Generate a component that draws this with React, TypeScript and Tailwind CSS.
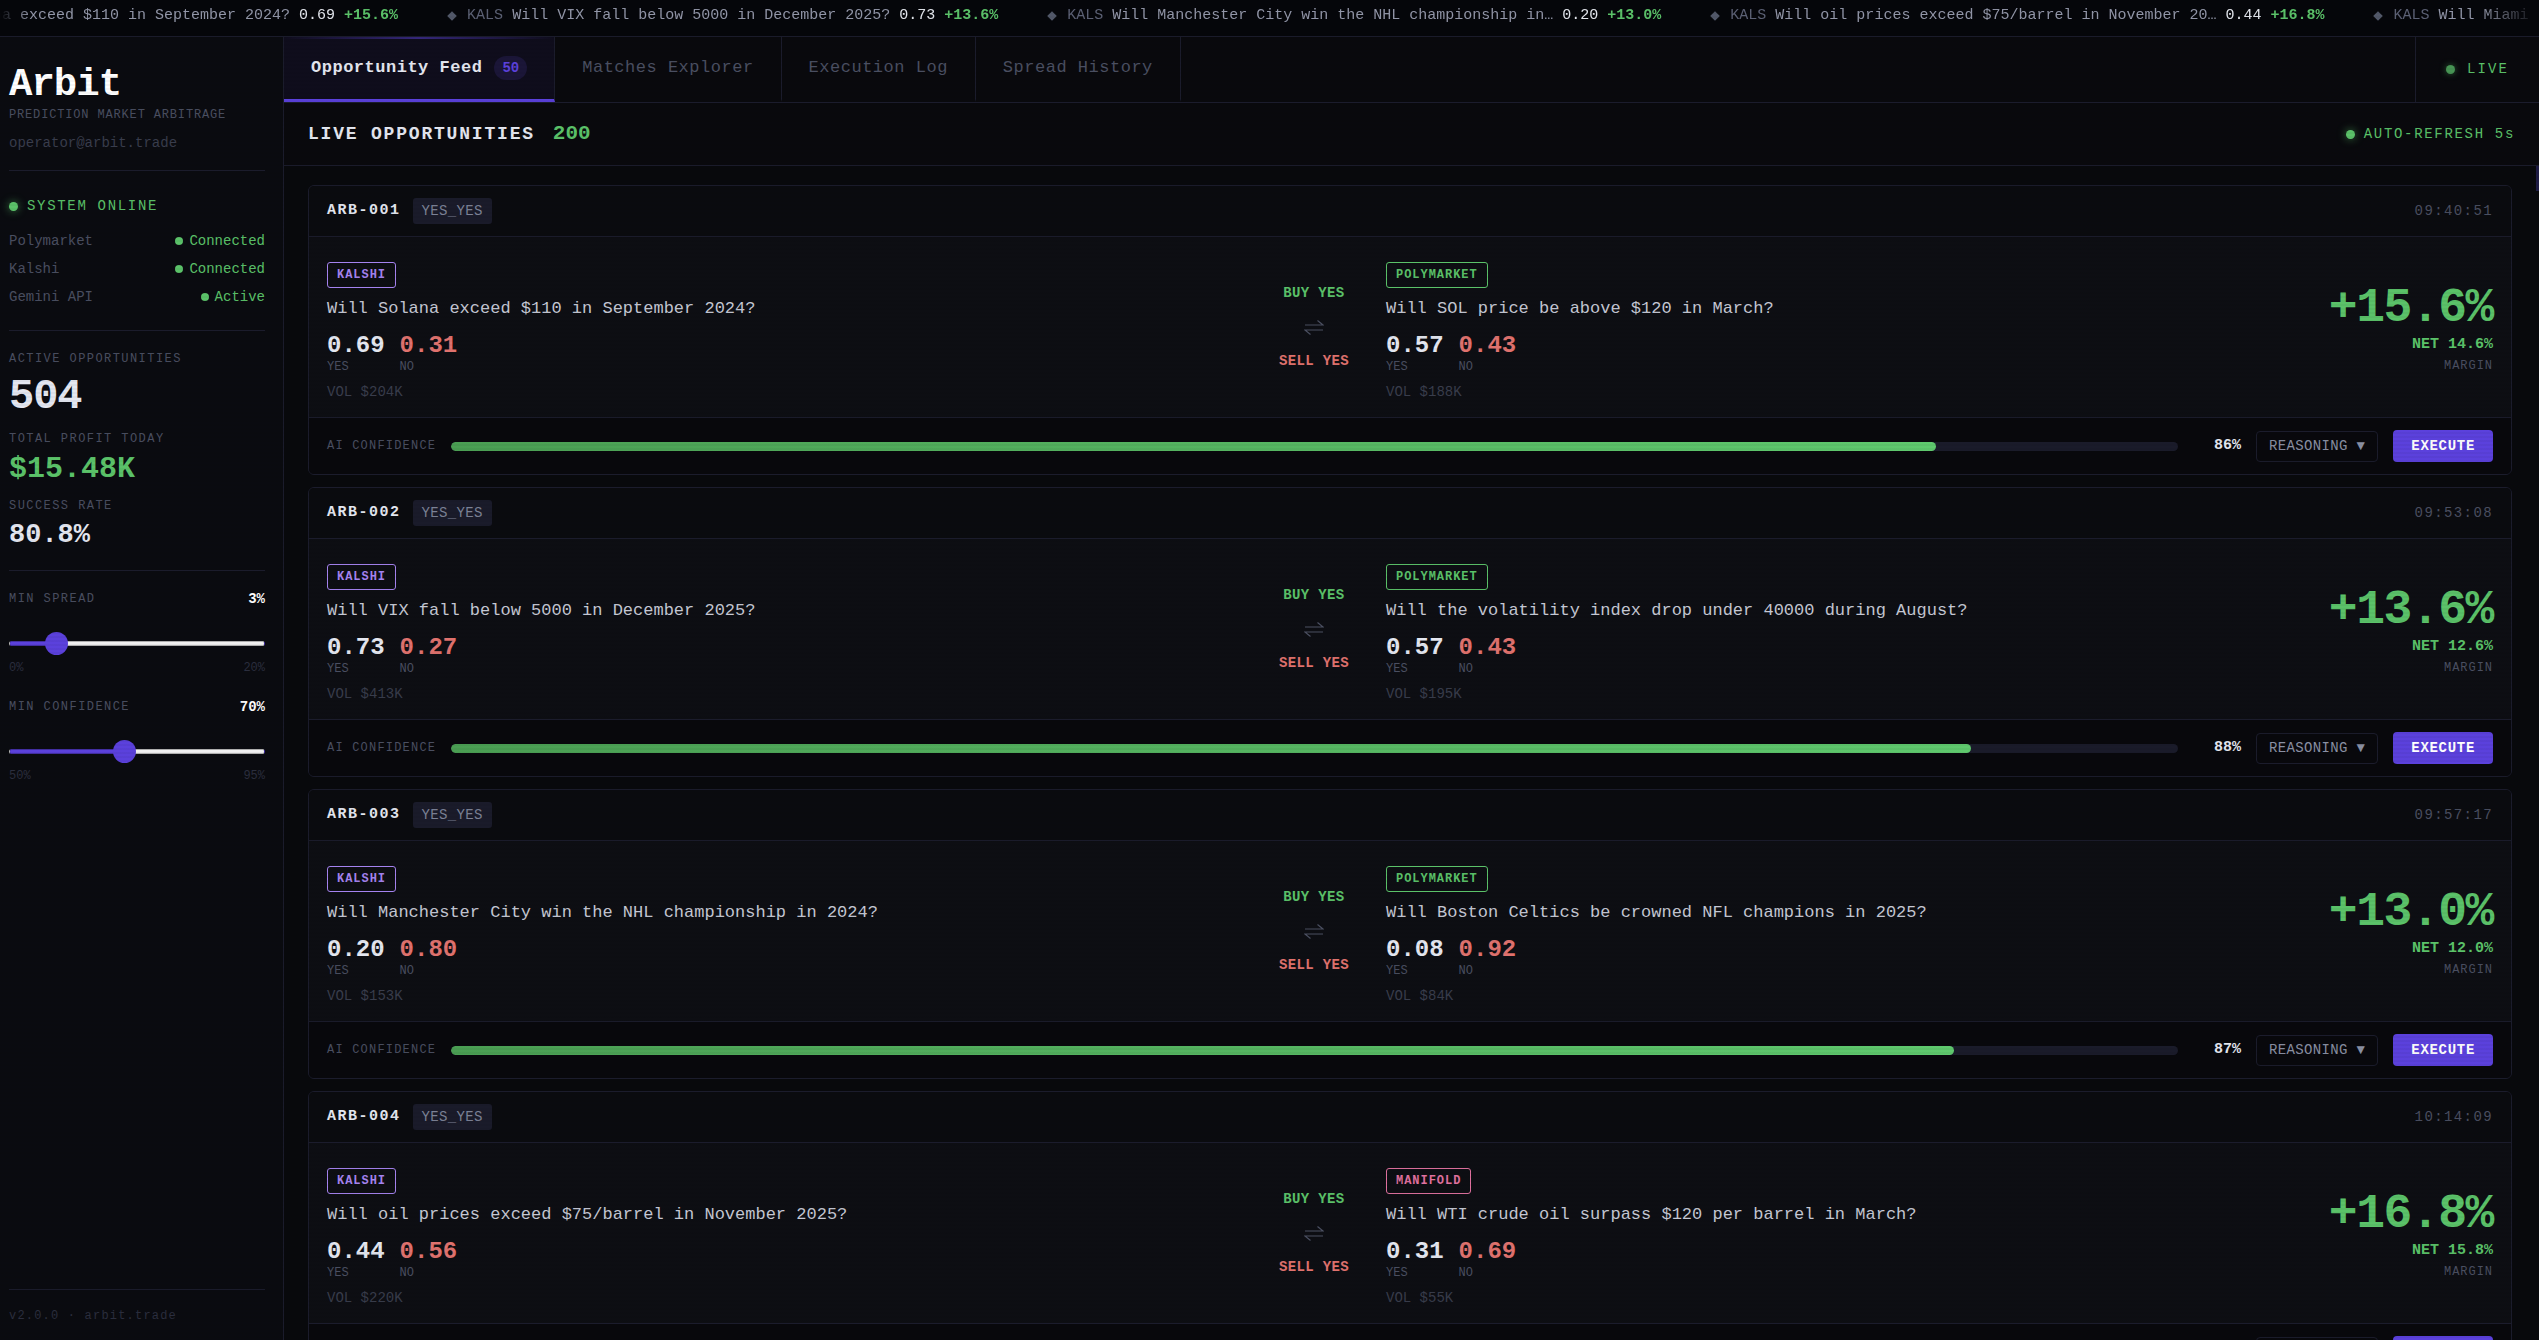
import { useState } from 'react'
import type { CSSProperties } from 'react'
import { clsx } from 'clsx'

type Platform = 'KALSHI' | 'POLYMARKET' | 'MANIFOLD'

interface Market {
  platform: Platform
  question: string
  yes: string
  no: string
  volume: string
}

interface Opportunity {
  id: string
  time: string
  left: Market
  right: Market
  spread: string
  net: string
  confidence: number
}

const TICKER = [
  { text: 'Will Solana exceed $110 in September 2024?', price: '0.69', spread: '+15.6%' },
  { text: 'Will VIX fall below 5000 in December 2025?', price: '0.73', spread: '+13.6%' },
  { text: 'Will Manchester City win the NHL championship in…', price: '0.20', spread: '+13.0%' },
  { text: 'Will oil prices exceed $75/barrel in November 20…', price: '0.44', spread: '+16.8%' },
  { text: 'Will Miami', price: '', spread: '' },
]

const TABS = [
  { id: 'feed', label: 'Opportunity Feed', count: 50 },
  { id: 'matches', label: 'Matches Explorer' },
  { id: 'log', label: 'Execution Log' },
  { id: 'history', label: 'Spread History' },
]

const SERVICES = [
  { name: 'Polymarket', status: 'Connected' },
  { name: 'Kalshi', status: 'Connected' },
  { name: 'Gemini API', status: 'Active' },
]

const OPPORTUNITIES: Opportunity[] = [
  {
    id: 'ARB-001',
    time: '09:40:51',
    left: { platform: 'KALSHI', question: 'Will Solana exceed $110 in September 2024?', yes: '0.69', no: '0.31', volume: '$204K' },
    right: { platform: 'POLYMARKET', question: 'Will SOL price be above $120 in March?', yes: '0.57', no: '0.43', volume: '$188K' },
    spread: '+15.6%',
    net: '14.6%',
    confidence: 86,
  },
  {
    id: 'ARB-002',
    time: '09:53:08',
    left: { platform: 'KALSHI', question: 'Will VIX fall below 5000 in December 2025?', yes: '0.73', no: '0.27', volume: '$413K' },
    right: { platform: 'POLYMARKET', question: 'Will the volatility index drop under 40000 during August?', yes: '0.57', no: '0.43', volume: '$195K' },
    spread: '+13.6%',
    net: '12.6%',
    confidence: 88,
  },
  {
    id: 'ARB-003',
    time: '09:57:17',
    left: { platform: 'KALSHI', question: 'Will Manchester City win the NHL championship in 2024?', yes: '0.20', no: '0.80', volume: '$153K' },
    right: { platform: 'POLYMARKET', question: 'Will Boston Celtics be crowned NFL champions in 2025?', yes: '0.08', no: '0.92', volume: '$84K' },
    spread: '+13.0%',
    net: '12.0%',
    confidence: 87,
  },
  {
    id: 'ARB-004',
    time: '10:14:09',
    left: { platform: 'KALSHI', question: 'Will oil prices exceed $75/barrel in November 2025?', yes: '0.44', no: '0.56', volume: '$220K' },
    right: { platform: 'MANIFOLD', question: 'Will WTI crude oil surpass $120 per barrel in March?', yes: '0.31', no: '0.69', volume: '$55K' },
    spread: '+16.8%',
    net: '15.8%',
    confidence: 86,
  },
]

const PLATFORM_STYLES: Record<Platform, string> = {
  KALSHI: 'border-[#a583f0] text-[#a583f0]',
  POLYMARKET: 'border-[#5bc269] text-[#5bc269]',
  MANIFOLD: 'border-[#e0719f] text-[#e0719f]',
}

function Ticker() {
  return (
    <div className="h-[37px] shrink-0 overflow-hidden border-b border-[#1b1c2c] bg-[#05060a]">
      <div className="flex h-8 items-center overflow-hidden [mask-image:linear-gradient(to_right,transparent,black_30px,black_calc(100%-60px),transparent)]">
        <div className="-ml-[178px] flex text-[15px] whitespace-nowrap">
          {TICKER.map((item) => (
            <div key={item.text} className="flex items-center gap-[9px] px-6">
              <svg viewBox="0 0 12 12" className="size-3 fill-[#525869]">
                <path d="M6 1.2 10.8 6 6 10.8 1.2 6Z" />
              </svg>
              <span className="text-[#5c6175]">KALS</span>
              <span className="text-[#9296a8]">{item.text}</span>
              <span className="text-[#e4e7ee]">{item.price}</span>
              <span className="font-bold text-[#5bc269]">{item.spread}</span>
            </div>
          ))}
        </div>
      </div>
    </div>
  )
}

function RangeField({ id, label, min, max, initial }: {
  id: string
  label: string
  min: number
  max: number
  initial: number
}) {
  const [value, setValue] = useState(initial)
  const fill = ((value - min) / (max - min)) * 100

  return (
    <div>
      <div className="flex h-6 items-center justify-between">
        <label htmlFor={id} className="text-[12px] tracking-[0.12em] text-[#4a4f61]">{label}</label>
        <span className="text-[14px] font-bold text-white">{value}%</span>
      </div>
      <input
        id={id}
        type="range"
        min={min}
        max={max}
        value={value}
        onChange={(e) => setValue(Number(e.target.value))}
        style={{ '--fill': `${fill}%` } as CSSProperties}
        className="mt-5 block h-6 w-full appearance-none bg-transparent [&::-webkit-slider-runnable-track]:h-[5px] [&::-webkit-slider-runnable-track]:rounded-full [&::-webkit-slider-runnable-track]:border [&::-webkit-slider-runnable-track]:border-black/25 [&::-webkit-slider-runnable-track]:bg-[linear-gradient(to_right,#5b41dc_var(--fill),#f0f0f0_var(--fill))] [&::-webkit-slider-thumb]:-mt-[10px] [&::-webkit-slider-thumb]:size-[23px] [&::-webkit-slider-thumb]:appearance-none [&::-webkit-slider-thumb]:rounded-full [&::-webkit-slider-thumb]:bg-[#5b41dc]"
      />
      <div className="mt-[3px] flex justify-between text-[12px] leading-5 text-[#2b2e3e]">
        <span>{min}%</span>
        <span>{max}%</span>
      </div>
    </div>
  )
}

function Sidebar() {
  return (
    <aside className="flex w-[284px] shrink-0 flex-col border-r border-[#1b1c2c] bg-[#0a0b10] pr-[18px] pl-[9px]">
      <div className="border-b border-[#1b1c2c] pt-7 pb-[17px]">
        <h1 className="text-[39px] leading-10 font-bold tracking-tight text-white">Arbit</h1>
        <p className="mt-0.5 text-[12px] leading-4 tracking-[0.07em] text-[#4a4f61]">PREDICTION MARKET ARBITRAGE</p>
        <p className="mt-[10px] text-[14px] leading-5 text-[#393d4c]">operator@arbit.trade</p>
      </div>

      <div className="border-b border-[#1b1c2c] pt-[25px] pb-[19px]">
        <div className="mb-[11px] flex h-5 items-center gap-[9px] text-[14px] tracking-[0.12em] text-[#5bc269]">
          <span className="size-[9px] rounded-full bg-[#5bc269] shadow-[0_0_8px_#3c8047]" />
          SYSTEM ONLINE
        </div>
        {SERVICES.map((service) => (
          <div key={service.name} className="flex h-7 items-center justify-between text-[14px]">
            <span className="text-[#4a4f61]">{service.name}</span>
            <span className="flex items-center gap-[6px] text-[#5bc269]">
              <span className="size-2 rounded-full bg-[#5bc269]" />
              {service.status}
            </span>
          </div>
        ))}
      </div>

      <div className="flex flex-col border-b border-[#1b1c2c] pt-5 pb-[19px]">
        <span className="text-[12px] leading-4 tracking-[0.12em] text-[#4a4f61]">ACTIVE OPPORTUNITIES</span>
        <span className="mt-2 text-[42px] leading-[44px] font-bold tracking-tight text-[#e4e7f0]">504</span>
        <span className="mt-3 text-[12px] leading-4 tracking-[0.12em] text-[#4a4f61]">TOTAL PROFIT TODAY</span>
        <span className="mt-[5px] text-[30px] leading-[34px] font-bold text-[#5bc269]">$15.48K</span>
        <span className="mt-3 text-[12px] leading-4 tracking-[0.12em] text-[#4a4f61]">SUCCESS RATE</span>
        <span className="mt-[5px] text-[27px] leading-8 font-bold text-[#e4e7f0]">80.8%</span>
      </div>

      <div className="flex flex-col gap-[17px] pt-4">
        <RangeField id="min-spread" label="MIN SPREAD" min={0} max={20} initial={3} />
        <RangeField id="min-confidence" label="MIN CONFIDENCE" min={50} max={95} initial={70} />
      </div>

      <div className="mt-auto border-t border-[#1b1c2c] pt-4 pb-[14px] text-[12px] leading-5 tracking-widest text-[#2b2e3e]">
        v2.0.0 · arbit.trade
      </div>
    </aside>
  )
}

function TabBar() {
  const [active, setActive] = useState('feed')

  return (
    <nav className="flex h-[66px] shrink-0 border-b border-[#1b1c2c] bg-[#09090d]">
      {TABS.map((tab) => {
        const isActive = tab.id === active
        return (
          <button
            key={tab.id}
            type="button"
            onClick={() => setActive(tab.id)}
            className={clsx(
              'relative flex items-center gap-3 border-r border-b-[3px] border-r-[#1b1c2c] px-[27px] text-[17px] tracking-[0.03em]',
              isActive ? 'border-b-[#5b41dc] bg-[#0f0d1c] font-bold text-[#e4e7f0]' : 'border-b-transparent text-[#4a4f61]',
            )}
          >
            {isActive && (
              <span className="absolute inset-x-0 top-0 h-0.5 bg-linear-to-r from-transparent via-[#5b41dc]/50 to-transparent" />
            )}
            {tab.label}
            {tab.count && (
              <span className="flex h-6 items-center rounded-full bg-[#1b1638] px-2 text-[14px] tracking-normal text-[#5b41dc]">
                {tab.count}
              </span>
            )}
          </button>
        )
      })}
      <div className="ml-auto flex items-center gap-3 border-l border-[#1b1c2c] px-[30px] text-[14px] tracking-[0.15em] text-[#5bc269]">
        <span className="size-[9px] rounded-full bg-[#479454] shadow-[0_0_6px_#2c6236]" />
        LIVE
      </div>
    </nav>
  )
}

function MarketSide({ market }: { market: Market }) {
  return (
    <div className="flex flex-col items-start pt-[25px] pb-4">
      <span
        className={clsx(
          'flex h-[26px] items-center rounded-[3px] border px-[9px] text-[12px] font-bold tracking-[0.08em]',
          PLATFORM_STYLES[market.platform],
        )}
      >
        {market.platform}
      </span>
      <p className="mt-[9px] text-[17px] leading-6 text-[#c5c8d4]">{market.question}</p>
      <div className="mt-[13px] flex gap-[15px]">
        <div>
          <div className="text-[24px] leading-6 font-bold text-[#e4e7f0]">{market.yes}</div>
          <div className="mt-[3px] text-[12px] leading-3 text-[#4a4f61]">YES</div>
        </div>
        <div>
          <div className="text-[24px] leading-6 font-bold text-[#e0726e]">{market.no}</div>
          <div className="mt-[3px] text-[12px] leading-3 text-[#4a4f61]">NO</div>
        </div>
      </div>
      <p className="mt-[10px] text-[14px] leading-[18px] text-[#393d4c]">VOL {market.volume}</p>
    </div>
  )
}

function OpportunityCard({ item }: { item: Opportunity }) {
  return (
    <article className="shrink-0 overflow-hidden rounded-md border border-[#1b1c2c] bg-[#0d0e13]">
      <header className="flex h-[51px] items-center gap-3 border-b border-[#1b1c2c] bg-[#0a0b0f] px-[18px]">
        <h3 className="text-[15px] font-bold tracking-widest text-[#e4e7f0]">{item.id}</h3>
        <span className="flex h-[26px] items-center rounded-[3px] bg-[#1a1b2a] px-[9px] text-[14px] tracking-wide text-[#7c8296]">
          YES_YES
        </span>
        <time className="ml-auto text-[14px] tracking-widest text-[#4a4f61]">{item.time}</time>
      </header>

      <div className="grid grid-cols-[1fr_120px_1fr_180px] items-center gap-x-3 px-[18px]">
        <MarketSide market={item.left} />
        <div className="flex flex-col items-center gap-3 text-[14px] leading-5 font-bold tracking-wide">
          <span className="text-[#5bc269]">BUY YES</span>
          <svg viewBox="0 0 20 24" className="h-6 w-5 fill-none stroke-[#4c5163]" strokeWidth="1.1">
            <path d="M1 10h18l-5.500-4.500" />
            <path d="M19 15H1l5.500 4.500" />
          </svg>
          <span className="text-[#e0726e]">SELL YES</span>
        </div>
        <MarketSide market={item.right} />
        <div className="pt-1 text-right">
          <div className="text-[48px] leading-[48px] font-bold tracking-[-0.03em] text-[#5bc269]">{item.spread}</div>
          <div className="mt-[3px] text-[15px] leading-5 font-bold text-[#5bc269]">NET {item.net}</div>
          <div className="mt-[3px] text-[12px] leading-4 tracking-[0.08em] text-[#4a4f61]">MARGIN</div>
        </div>
      </div>

      <footer className="flex items-center gap-[15px] border-t border-[#1b1c2c] bg-[#08080c] px-[18px] py-3">
        <span className="text-[12px] tracking-widest text-[#4a4f61]">AI CONFIDENCE</span>
        <div className="h-[9px] flex-1 overflow-hidden rounded-full bg-[#1a1b2a]">
          <div
            className="h-full rounded-full bg-linear-to-r from-[#4a9e53] to-[#5fc96e]"
            style={{ width: `${item.confidence}%` }}
          />
        </div>
        <span className="w-12 text-right text-[15px] font-bold text-[#e4e7f0]">{item.confidence}%</span>
        <button
          type="button"
          className="h-[31px] rounded-[4px] border border-[#1b1c2c] px-3 text-[14px] tracking-wide text-[#8a90a3]"
        >
          REASONING ▼
        </button>
        <button
          type="button"
          className="h-8 rounded-[4px] bg-[#5b41dc] px-[18px] text-[14px] font-bold tracking-wider text-white"
        >
          EXECUTE
        </button>
      </footer>
    </article>
  )
}

export default function App() {
  return (
    <div className="relative flex h-screen flex-col overflow-hidden bg-[#08090c] font-['Liberation_Mono',monospace]">
      <Ticker />
      <div className="flex min-h-0 flex-1">
        <Sidebar />
        <main className="flex min-w-0 flex-1 flex-col">
          <TabBar />
          <div className="flex h-[63px] shrink-0 items-center justify-between border-b border-[#1b1c2c] bg-[#09090d] px-6">
            <h2 className="flex items-center gap-[18px] text-[18px] font-bold tracking-widest text-[#e4e7f0]">
              LIVE OPPORTUNITIES
              <span className="text-[21px] tracking-normal text-[#5bc269]">200</span>
            </h2>
            <div className="flex items-center gap-[9px] text-[14px] tracking-[0.12em] text-[#5bc269]">
              <span className="size-[9px] rounded-full bg-[#5bc269] shadow-[0_0_8px_#3c8047]" />
              AUTO-REFRESH 5s
            </div>
          </div>
          <div className="flex min-h-0 flex-1">
            <div className="flex min-w-0 flex-1 flex-col gap-3 overflow-hidden px-6 pt-[19px]">
              {OPPORTUNITIES.map((item) => (
                <OpportunityCard key={item.id} item={item} />
              ))}
            </div>
            <div className="w-[3px]">
              <div className="h-[25px] bg-[#1e1c45]" />
            </div>
          </div>
        </main>
      </div>
      {/* CRT scanlines */}
      <div className="pointer-events-none absolute inset-0 bg-[repeating-linear-gradient(0deg,transparent_0px,transparent_2px,rgba(0,0,0,0.04)_2px,rgba(0,0,0,0.04)_4px)]" />
    </div>
  )
}
